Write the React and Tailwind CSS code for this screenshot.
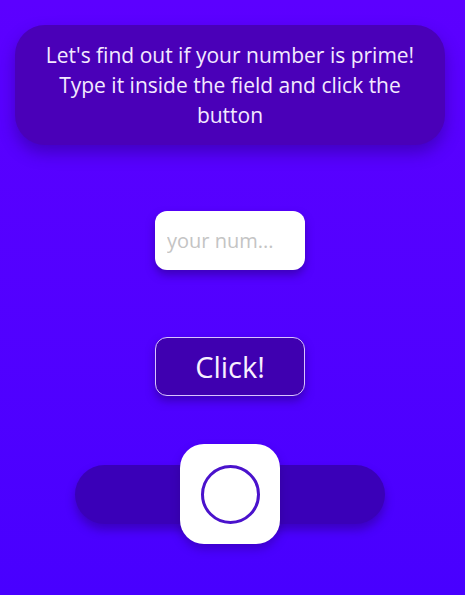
import React, { useState } from "react";

const App = () => {
  const [value, setValue] = useState("");
  const [on, setOn] = useState(false);

  return (
    <div
      className="flex min-h-[595px] w-full flex-col items-center bg-gradient-to-b from-[#5c00ff] to-[#4800ff] pl-[15px] pr-[20px] pt-[25px]"
      style={{ fontFamily: "'Open Sans', 'Noto Sans', sans-serif" }}
    >
      <div className="flex h-[120px] w-full items-center justify-center rounded-[30px] bg-[#4a00b8] px-6 text-center text-[21px] leading-[30px] text-[#f3e9ff] shadow-[0_8px_16px_rgba(40,0,120,0.45)]">
        Let's find out if your number is prime! Type it inside the field and click the button
      </div>

      <input
        type="text"
        value={value}
        onChange={(e) => setValue(e.target.value)}
        placeholder="your num..."
        className="mt-[66px] h-[59px] w-[150px] rounded-[12px] bg-white px-3 text-[20px] text-gray-700 shadow-[0_5px_8px_rgba(40,0,120,0.5)] outline-none placeholder:text-[#c4c4c4]"
      />

      <button
        type="button"
        className="mt-[67px] h-[59px] w-[150px] rounded-[12px] border border-[#d9c4ff] bg-[#3f00b0] text-[29px] text-[#f8f0ff] shadow-[0_5px_8px_rgba(40,0,120,0.5)]"
      >
        Click!
      </button>

      <div className="relative mt-[48px] flex h-[100px] w-[310px] items-center justify-center">
        <div className="h-[59px] w-full rounded-full bg-[#3a00b8] shadow-[0_6px_10px_rgba(40,0,120,0.45)]" />
        <button
          type="button"
          onClick={() => setOn((p) => !p)}
          className="absolute left-[105px] top-0 flex h-[100px] w-[100px] items-center justify-center rounded-[24px] bg-white shadow-[0_5px_10px_rgba(40,0,120,0.4)]"
        >
          <span className="h-[59px] w-[59px] rounded-full border-[3px] border-[#4a12cc]" />
        </button>
      </div>
    </div>
  );
};

export default App;
